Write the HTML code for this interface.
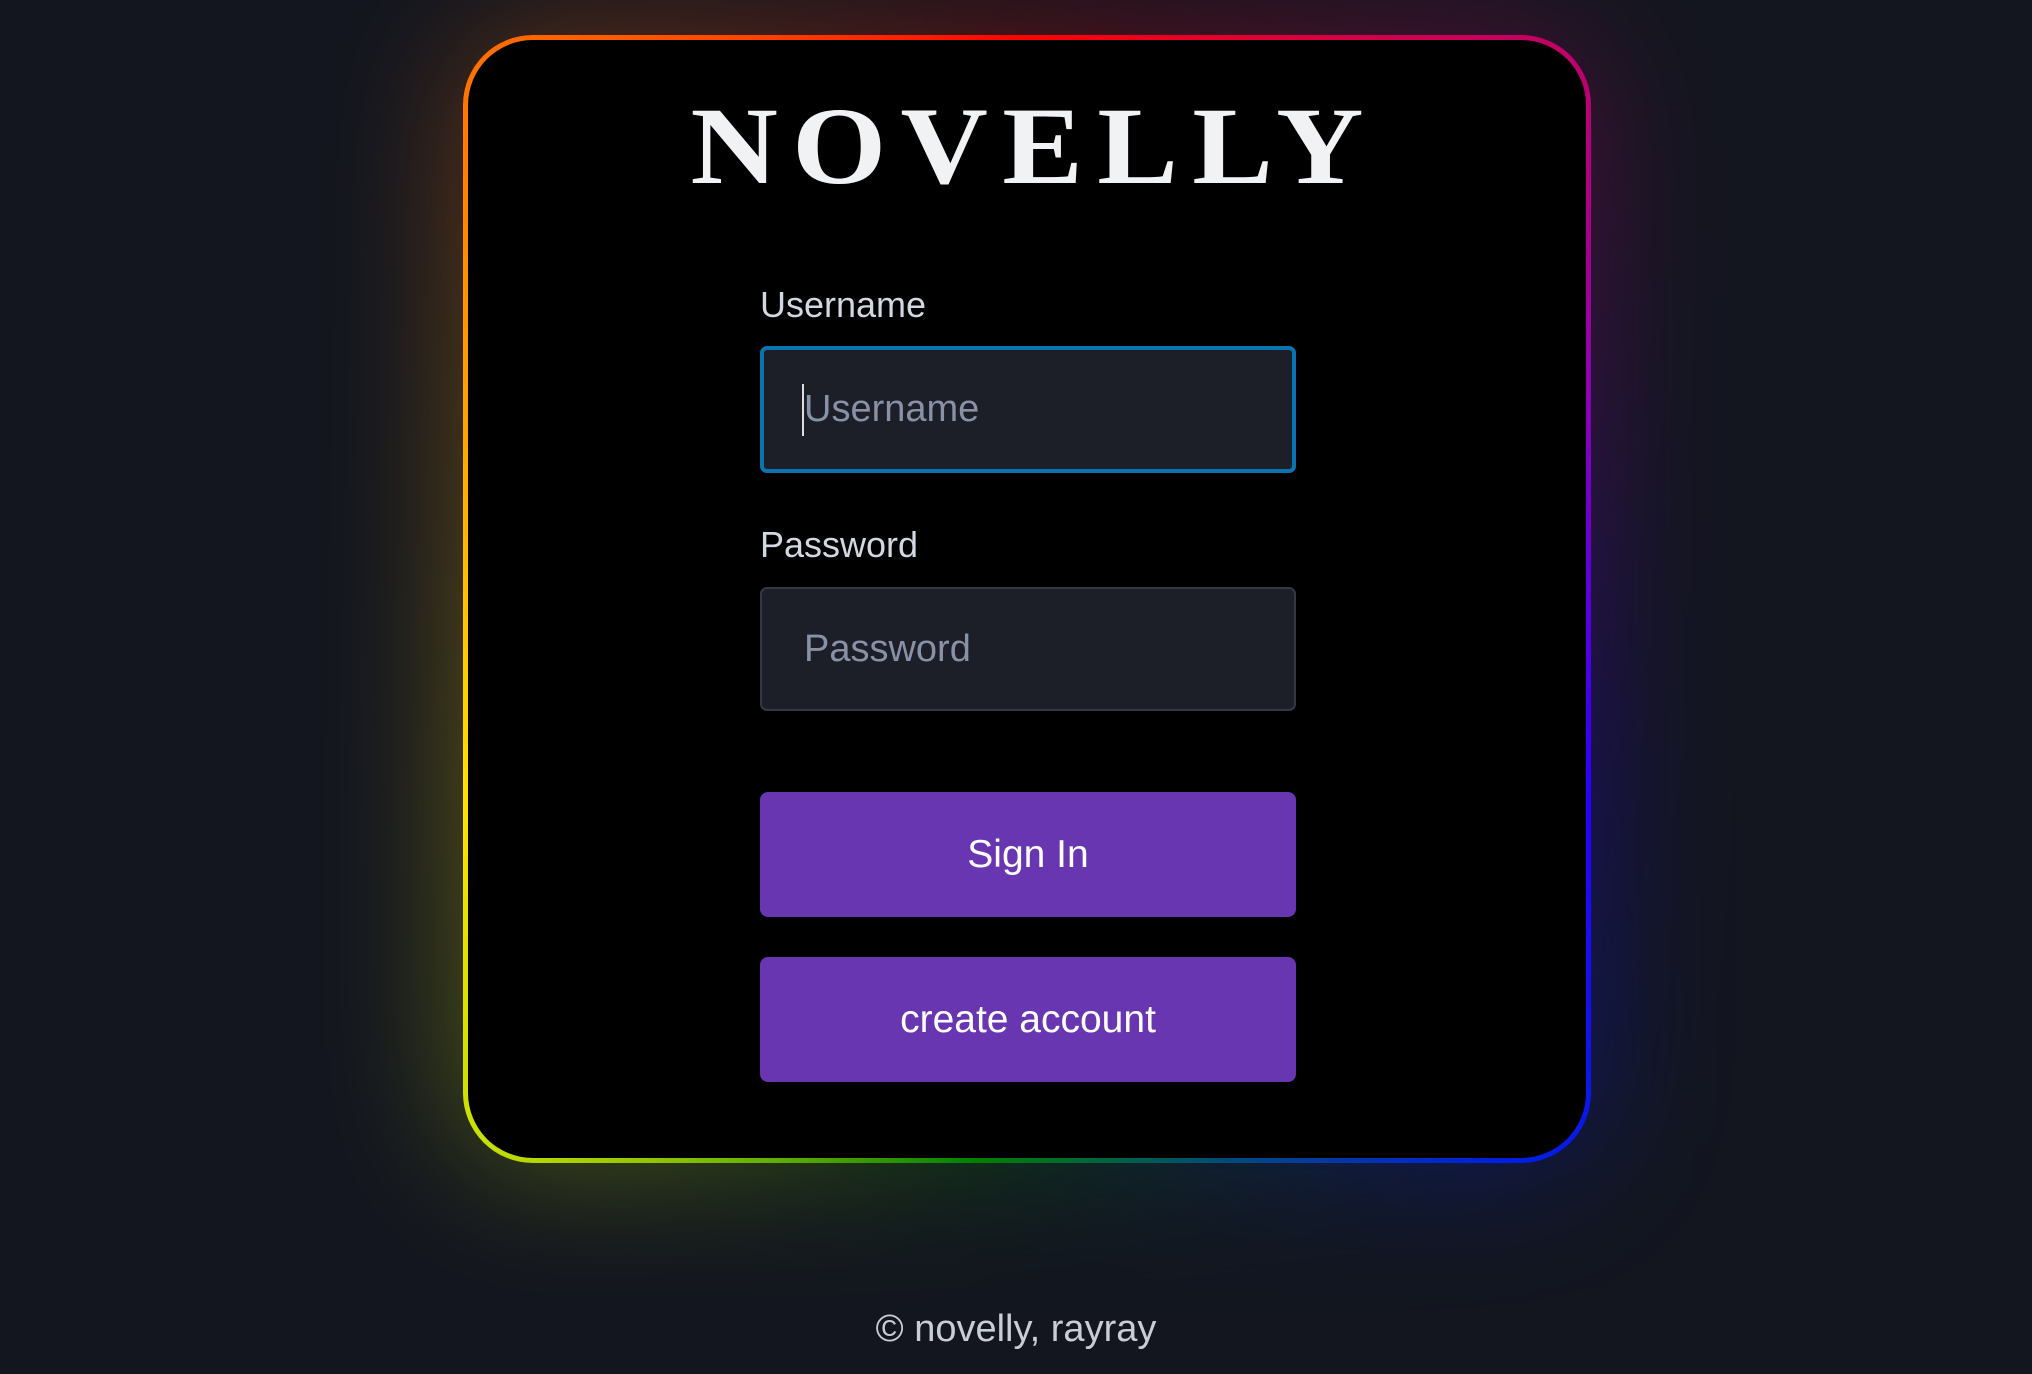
<!DOCTYPE html>
<html><head><meta charset="utf-8"><style>
html,body{margin:0;padding:0;width:2032px;height:1374px;background:#13161f;overflow:hidden;font-family:"Segoe UI","Liberation Sans",sans-serif}
.glow{position:absolute;left:463px;top:35px;width:1128px;height:1128px;border-radius:70px;
background:conic-gradient(from 0deg,#ff0000 0deg,#c0006a 45deg,#8000c0 75deg,#2a00ff 110deg,#0020e0 140deg,#008000 185deg,#c8e000 225deg,#ffe000 250deg,#ff9000 300deg,#ff4000 335deg,#ff0000 360deg);
filter:blur(70px);opacity:.35}
.card{position:absolute;left:463px;top:35px;width:1128px;height:1128px;border-radius:70px;
background:conic-gradient(from 0deg,#ff0000 0deg,#c0006a 45deg,#8000c0 75deg,#2a00ff 110deg,#0020e0 140deg,#008000 185deg,#c8e000 225deg,#ffe000 250deg,#ff9000 300deg,#ff4000 335deg,#ff0000 360deg)}
.inner{position:absolute;left:5px;top:5px;right:5px;bottom:5px;background:#000;border-radius:65px}
.title{position:absolute;left:0;width:100%;top:56px;text-align:center;font-family:"Liberation Serif",serif;font-weight:bold;font-size:110px;color:#f1f2f4;letter-spacing:13px;text-indent:13px;line-height:110px;transform:scaleX(1.1);transform-origin:50% 50%}
.lbl{position:absolute;left:760px;font-size:36px;color:#d2d8e2}
.inp{position:absolute;left:760px;width:536px;box-sizing:border-box;background:#1c1f28;border-radius:7px;color:#8891a6;font-size:38px;padding-left:42px;display:flex;align-items:center}
.btn{position:absolute;left:760px;width:536px;height:125px;background:#6936b2;border-radius:8px;color:#fff;font-size:39px;display:flex;align-items:center;justify-content:center}
.foot{position:absolute;left:0;width:2032px;top:1308px;text-align:center;color:#c9cdd6;font-size:38px}
</style></head><body>
<div class="glow"></div>
<div class="card"><div class="inner"></div><div class="title">NOVELLY</div></div>
<div class="lbl" style="top:284px">Username</div>
<div class="inp" style="top:346px;height:127px;border:4px solid #0a74b0;padding-left:38px"><span style="border-left:2px solid #ddd;height:52px;display:inline-flex;align-items:center">Username</span></div>
<div class="lbl" style="top:524px">Password</div>
<div class="inp" style="top:587px;height:124px;border:2px solid #323844">Password</div>
<div class="btn" style="top:792px">Sign In</div>
<div class="btn" style="top:957px">create account</div>
<div class="foot">© novelly, rayray</div>
</body></html>
